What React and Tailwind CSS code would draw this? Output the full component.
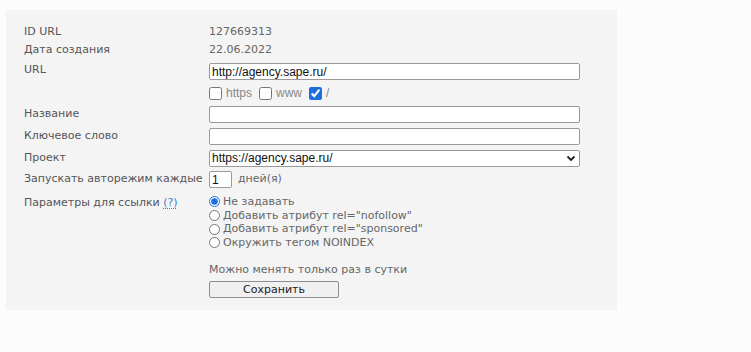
import React from 'react';

const font = { fontFamily: '"DejaVu Sans", Verdana, sans-serif' };

const Row = ({ label, children, className = '' }) => (
  <div className={`flex ${className}`}>
    <div className="w-[185px] shrink-0 leading-4 text-[#555]">{label}</div>
    <div className="flex-1">{children}</div>
  </div>
);

const TextInput = ({ value = '', className = 'w-[371px]' }) => (
  <input
    type="text"
    defaultValue={value}
    className={`${className} h-[17px] rounded-[2px] border border-[#9a9a9a] bg-white px-[2px] text-[12px] leading-[15px] text-[#111] outline-none`}
    style={{ fontFamily: '"Liberation Sans", Arial, sans-serif' }}
  />
);

export default function App() {
  const radios = [
    'Не задавать',
    'Добавить атрибут rel="nofollow"',
    'Добавить атрибут rel="sponsored"',
    'Окружить тегом NOINDEX',
  ];

  return (
    <div className="min-h-[352px] w-[751px] bg-[#fcfcfc] pl-[6px] pt-[10px]" style={font}>
      <div className="w-[611px] h-[300px] bg-[#f4f4f5] pl-[18px] pt-[14px] text-[11px]">
        <Row label="ID URL" className="h-[18px]">
          <span className="leading-4 text-[#666]">127669313</span>
        </Row>
        <Row label="Дата создания" className="h-[20px]">
          <span className="leading-4 text-[#666]">22.06.2022</span>
        </Row>
        <Row label="URL" className="h-[21px]">
          <div className="pt-[1px]">
            <TextInput value="http://agency.sape.ru/" />
          </div>
        </Row>
        <Row label="" className="h-[23px]">
          <div
            className="flex items-center gap-[4px] pt-[1px] text-[11px] text-[#888]"
            style={{ fontFamily: '"Liberation Sans", Arial, sans-serif' }}
          >
            <input type="checkbox" className="m-0 h-[13px] w-[13px]" />
            <span className="mr-[3px] text-[12px]">https</span>
            <input type="checkbox" className="m-0 h-[13px] w-[13px]" />
            <span className="mr-[3px] text-[12px]">www</span>
            <input type="checkbox" defaultChecked className="m-0 h-[13px] w-[13px] accent-[#1d6fe0]" />
            <span className="text-[12px]">/</span>
          </div>
        </Row>
        <Row label="Название" className="h-[22px]">
          <TextInput />
        </Row>
        <Row label="Ключевое слово" className="h-[22px]">
          <TextInput />
        </Row>
        <Row label="Проект" className="h-[21px]">
          <div className="relative w-[371px]">
            <select
              defaultValue="a"
              className="h-[17px] w-[371px] appearance-none rounded-[2px] border border-[#9a9a9a] bg-white px-[2px] text-[12px] leading-[15px] text-[#111] outline-none"
              style={{ fontFamily: '"Liberation Sans", Arial, sans-serif' }}
            >
              <option value="a">https://agency.sape.ru/</option>
            </select>
            <svg
              className="pointer-events-none absolute right-[4px] top-[5px]"
              width="10"
              height="7"
              viewBox="0 0 10 7"
            >
              <path d="M1.5 1.5 L5 5 L8.5 1.5" fill="none" stroke="#222" strokeWidth="1.8" />
            </svg>
          </div>
        </Row>
        <Row label="Запускать авторежим каждые" className="h-[23px]">
          <div className="flex items-center gap-[6px]">
            <TextInput value="1" className="w-[23px]" />
            <span className="text-[#666]">дней(я)</span>
          </div>
        </Row>
        <Row
          label={
            <span>
              Параметры для ссылки{' '}
              <span className="text-[#3f7fc9] underline decoration-dotted underline-offset-2">(?)</span>
            </span>
          }
          className="pt-[1px]"
        >
          <div className="flex flex-col">
            {radios.map((r, i) => (
              <label key={r} className="flex h-[13.7px] items-center gap-[3px] text-[#666]">
                <input
                  type="radio"
                  name="rel"
                  defaultChecked={i === 0}
                  className="m-0 h-[11px] w-[11px] accent-[#1d6fe0]"
                />
                <span className="leading-4">{r}</span>
              </label>
            ))}
            <div className="mt-[12px] leading-4 text-[#666]">Можно менять только раз в сутки</div>
            <button
              type="button"
              className="mt-[3px] h-[17px] w-[130px] rounded-[2px] border border-[#8f8f8f] bg-[#f0f0f0] text-[11px] leading-[15px] text-[#222]"
            >
              Сохранить
            </button>
          </div>
        </Row>
      </div>
    </div>
  );
}
